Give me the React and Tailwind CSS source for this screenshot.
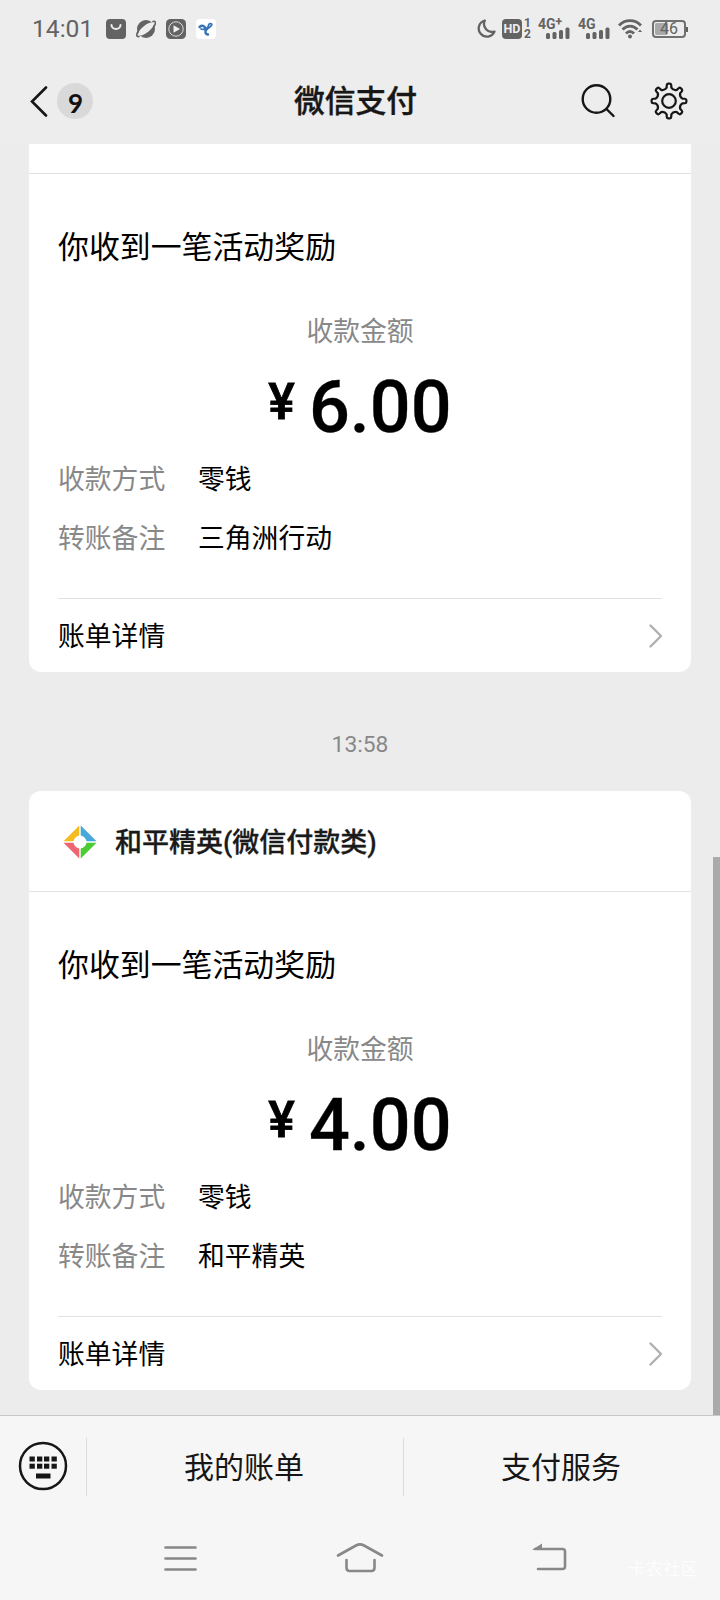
import React from "react";

const bills = [
  {
    title: "三角洲行动(微信付款类)",
    amount: "6.00",
    method: "零钱",
    remark: "三角洲行动",
    clipped: true,
  },
  {
    title: "和平精英(微信付款类)",
    amount: "4.00",
    method: "零钱",
    remark: "和平精英",
  },
];

// eight rounded teeth around the centre
const gearPath = () => {
  const point = (r, deg) => {
    const a = (deg * Math.PI) / 180;
    return `${(19 + r * Math.sin(a)).toFixed(2)} ${(19 - r * Math.cos(a)).toFixed(2)}`;
  };
  let d = "";
  for (let i = 0; i < 8; i++) {
    const a = i * 45;
    d += `${i === 0 ? "M" : "L"}${point(13.6, a - 10)} L${point(16, a - 8)} Q${point(17.4, a - 7)} ${point(17.4, a - 3)} L${point(17.4, a + 3)} Q${point(17.4, a + 7)} ${point(16, a + 8)} L${point(13.6, a + 10)} Q${point(11.2, a + 22.5)} ${point(13.6, a + 35)} `;
  }
  return d + "Z";
};

const Signal = () => (
  <svg className="h-3 w-6" viewBox="0 0 24 12" fill="#636363">
    <rect x="0" y="6" width="4" height="6" rx="1.5" />
    <rect x="6.5" y="5" width="4" height="7" rx="1.5" />
    <rect x="13" y="3" width="4" height="9" rx="1.5" />
    <rect x="19.5" y="0.5" width="4" height="11.5" rx="1.5" />
  </svg>
);

const StatusBar = () => (
  <div className="flex h-[58px] items-center justify-between pl-8 pr-8 text-[#636363]">
    <div className="flex items-center gap-[10px]">
      <span className="w-16 pt-px text-[24.6px] leading-none">14:01</span>
      <svg className="h-5 w-5" viewBox="0 0 20 20">
        <rect width="20" height="20" rx="4" fill="#636363" />
        <path d="M5.5 6a4.5 4 0 0 0 9 0" fill="none" stroke="#eee" strokeWidth="2" strokeLinecap="round" />
      </svg>
      <svg className="h-5 w-5" viewBox="0 0 20 20">
        <circle cx="10" cy="10" r="9" fill="#636363" />
        <ellipse cx="10" cy="10" rx="9.5" ry="3.6" transform="rotate(-38 10 10)" fill="#ededed" />
        <path d="M2 12.5C0 16 0.5 18 3 17.5M17 2.5C20 1.5 20 4.5 18 7.5" fill="none" stroke="#636363" strokeWidth="1.6" strokeLinecap="round" />
      </svg>
      <svg className="h-5 w-5" viewBox="0 0 20 20">
        <rect width="20" height="20" rx="4.5" fill="#636363" />
        <circle cx="10" cy="10" r="7.2" fill="none" stroke="#ddd" strokeWidth="1" />
        <path d="M7.5 6.3L14 10L7.5 13.7Z" fill="#eee" />
      </svg>
      <svg className="h-5 w-5" viewBox="0 0 20 20" fill="none" stroke="#3674b8" strokeLinecap="round">
        <rect width="20" height="20" rx="4" fill="#fff" stroke="none" />
        <path d="M3.5 8C6.5 5.5 9.5 7.5 9.5 10.5C9.5 13 9 15.5 12 15.5" strokeWidth="2.4" />
        <path d="M5 10C8 11 12.5 9 12.5 6.5C12.5 4.5 15.5 4 15.8 5.5C16 8 12 8 10.5 11" strokeWidth="1.8" />
      </svg>
    </div>

    <div className="flex items-center">
      <svg className="mr-[6px] h-5 w-[19px]" viewBox="0 0 19 20">
        <path d="M7.8 1.5A8.2 8.2 0 1 0 17.5 12.5A8 8 0 0 1 7.8 1.5Z" fill="none" stroke="#636363" strokeWidth="2.3" strokeLinejoin="round" />
      </svg>
      <span className="flex h-5 w-5 items-center justify-center rounded-[4px] bg-[#636363] text-[12.5px] font-bold leading-none text-[#eee]">
        HD
      </span>
      <span className="ml-[2px] mr-[6px] flex w-[8px] flex-col text-[12px] font-bold leading-[11px]">
        <span>1</span>
        <span>2</span>
      </span>
      <span className="mr-[8px] flex h-[22px] w-[32px] flex-col">
        <span className="flex h-[9px] text-[14px] font-bold leading-[12px]">
          4G<span className="-mt-[2px] text-[12px]">+</span>
        </span>
        <span className="flex justify-end"><Signal /></span>
      </span>
      <span className="mr-[8px] flex h-[22px] w-[32px] flex-col">
        <span className="h-[9px] text-[14px] font-bold leading-[12px]">4G</span>
        <span className="flex justify-end"><Signal /></span>
      </span>
      <svg className="mr-[10px] h-5 w-6" viewBox="0 0 24 20">
        <g fill="none" stroke="#636363" strokeWidth="2.9">
          <path d="M1 6.5C7 0 17 0 23 6.5" />
          <path d="M4.5 10.5C9 6 15 6 19.5 10.5" />
          <path d="M8 14.5C10.5 12 13.5 12 16 14.5" />
        </g>
        <circle cx="12" cy="17.5" r="2" fill="#636363" />
        <path d="M22 10.5L24 13H20Z" fill="#636363" />
      </svg>
      <span className="relative flex h-[18px] w-[34px] items-center justify-center overflow-hidden rounded-[4px] border-2 border-[#707070] text-[16px] leading-none">
        <span className="absolute left-[1px] top-[1px] h-[12px] w-[13px] rounded-[2px] bg-[#a8a8a8]" />
        <span className="relative">46</span>
      </span>
      <span className="h-[5px] w-[2px] bg-[#636363]" />
    </div>
  </div>
);

const Header = () => (
  <header className="h-36 shrink-0 bg-[#ededed]">
    <StatusBar />
    <div className="grid h-[86px] grid-cols-[1fr_auto_1fr] items-center pl-[30px] pr-8">
      <div className="flex items-center gap-[9px]">
        <svg className="h-[31px] w-[18px]" viewBox="0 0 18 31">
          <path d="M16 1.5L2 15.5L16 29.5" fill="none" stroke="#161616" strokeWidth="2.6" strokeLinecap="round" />
        </svg>
        <span className="flex h-9 w-9 items-center justify-center rounded-full bg-[#d9d9d9] pl-px pt-[3px] font-['Lato',sans-serif] text-[26px] font-bold leading-none text-[#111]">
          9
        </span>
      </div>
      <h1 className="-ml-[7px] pt-[2px] text-[30.8px] font-medium leading-none text-[#171717] [-webkit-text-stroke:0.4px]">
        微信支付
      </h1>
      <div className="flex items-center justify-end gap-[35px]">
        <svg className="h-[34px] w-[34px]" viewBox="0 0 34 34" fill="none" stroke="#161616" strokeWidth="2.4" strokeLinecap="round">
          <circle cx="15.5" cy="15" r="13.8" />
          <path d="M25.5 25L32.5 32" />
        </svg>
        <svg className="h-[38px] w-[38px]" viewBox="0 0 38 38" fill="none" stroke="#161616" strokeWidth="2.2" strokeLinejoin="round">
          <path d={gearPath()} />
          <circle cx="19" cy="19" r="6.8" />
        </svg>
      </div>
    </div>
  </header>
);

const GameLogo = () => (
  <svg className="h-[34px] w-[34px]" viewBox="0 0 34 34">
    <path d="M16.300 0.500V10.500Q11.500 11.500 10.500 16.300H0.500Z" fill="#f3bd22" />
    <path d="M17.700 0.500V10.500Q22.500 11.500 23.500 16.300H33.500Z" fill="#46a9d9" />
    <path d="M16.300 33.500V23.500Q11.500 22.500 10.500 17.700H0.500Z" fill="#ed6570" />
    <path d="M17.700 33.500V23.500Q22.500 22.500 23.500 17.700H33.500Z" fill="#4dcb32" />
  </svg>
);

const Row = ({ label, value }) => (
  <div className="flex h-[59px] items-center pt-[2px] text-[26.8px]">
    <span className="w-[140px] text-[#888]">{label}</span>
    <span>{value}</span>
  </div>
);

const BillCard = ({ bill }) => (
  <section
    className={`bg-white text-black ${bill.clipped ? "rounded-b-xl" : "rounded-xl"}`}
  >
    {bill.clipped ? (
      <div className="h-[30px] border-b border-[#e2e2e2]" />
    ) : (
      <div className="flex h-[101px] items-center gap-[18px] border-b border-[#e2e2e2] pl-[34px] pt-[2px]">
        <GameLogo />
        <h2 className="pt-[3px] text-[27px] font-medium leading-none text-[#1a1a1a] [-webkit-text-stroke:0.3px]">
          {bill.title}
        </h2>
      </div>
    )}
    <div className="px-[29px]">
      <p className="pt-[57px] text-[30.9px] leading-[34px]">你收到一笔活动奖励</p>
      <p className="mt-[51px] text-center text-[26.8px] leading-[32px] text-[#888]">收款金额</p>
      <div className="mt-[18px] flex h-[81px] items-start justify-center font-medium">
        <span className="mr-[14px] pt-[4px] text-[50px] leading-[65px] [-webkit-text-stroke:0.8px]">¥</span>
        <span className="text-[72px] leading-[84px] [-webkit-text-stroke:0.3px]">{bill.amount}</span>
      </div>
      <div className="mt-[3px]">
        <Row label="收款方式" value={bill.method} />
        <Row label="转账备注" value={bill.remark} />
      </div>
      <div className="mt-[30px] flex h-[74px] items-center justify-between border-t border-[#e2e2e2] text-[26.8px]">
        <span className="pt-[3px]">账单详情</span>
        <svg className="h-6 w-[14px]" viewBox="0 0 14 24">
          <path d="M2.5 1.5L13 12L2.5 22.5" fill="none" stroke="#b0b0b0" strokeWidth="2.4" strokeLinecap="round" strokeLinejoin="round" />
        </svg>
      </div>
    </div>
  </section>
);

const BottomMenu = () => (
  <div className="flex h-[102px] items-center border-t border-[#c8c8c8] text-[30px] text-[#161616]">
    <div className="flex h-[58px] w-[87px] items-center border-r border-[#dcdcdc] pb-[2px] pl-[18px]">
      <svg className="h-[50px] w-[50px]" viewBox="0 0 50 50">
        <circle cx="25" cy="25" r="23" fill="none" stroke="#161616" strokeWidth="2.5" />
        <g fill="#161616">
          {[11.5, 19, 26, 33.5].map((x) => (
            <React.Fragment key={x}>
              <rect x={x} y="15.5" width="5.3" height="5" />
              <rect x={x} y="22.7" width="5.3" height="5" />
            </React.Fragment>
          ))}
          <rect x="18" y="32.5" width="14.5" height="5" />
        </g>
      </svg>
    </div>
    <div className="flex h-[58px] w-[317px] items-center justify-center border-r border-[#dcdcdc] pr-[2px] pt-[2px]">
      我的账单
    </div>
    <div className="flex h-[58px] flex-1 items-center justify-center pr-[2px] pt-[2px]">支付服务</div>
  </div>
);

const NavBar = () => (
  <nav className="relative flex h-[82px] items-center pl-[162px]">
    <svg className="h-[30px] w-[37px]" viewBox="0 0 37 30" stroke="#888" strokeWidth="2.7" strokeLinecap="round">
      <path d="M3.5 4.5H33.5M3.5 15.5H33.5M3.5 26.5H33.5" />
    </svg>
    <svg className="ml-[137px] h-[32px] w-[48px]" viewBox="0 0 48 32" fill="none" stroke="#888" strokeWidth="2.6" strokeLinecap="round" strokeLinejoin="round">
      <path d="M2 13.5L20 3.5Q24 1.3 28 3.5L46 13.5" />
      <path d="M10.5 18V25.5Q10.5 29 13.5 29H35.5Q38.5 29 38.5 25.5V18" />
    </svg>
    <svg className="ml-[148px] h-[30px] w-[36px]" viewBox="0 0 36 30" fill="none" stroke="#888" strokeWidth="2.6" strokeLinecap="round">
      <path d="M3 6H30.5Q33 6 33 8.5V23.5Q33 26 30.5 26H6" />
      <path d="M0 7L10 0.5V7Z" fill="#888" stroke="none" />
    </svg>
    <span className="absolute right-[22px] top-[40px] text-[17.5px] leading-[24px] text-[#fdfdfd]">卡农社区</span>
  </nav>
);

const App = () => {
  return (
    <div className="flex h-[1600px] w-[720px] flex-col overflow-hidden bg-[#ececec] font-['Roboto','Noto_Sans_CJK_SC',sans-serif]">
      <Header />
      <main className="relative h-[1271px] shrink-0 px-[29px]">
        <BillCard bill={bills[0]} />
        <p className="flex h-[119px] items-center justify-center pt-[28px] text-[22.8px] text-[#888]">13:58</p>
        <BillCard bill={bills[1]} />
        {/* Scrollbar */}
        <div className="absolute bottom-0 right-0 h-[558px] w-[7px] bg-[#aaa]" />
      </main>
      <footer className="flex-1 bg-[#f6f6f6]">
        <BottomMenu />
        <NavBar />
      </footer>
    </div>
  );
};

export default App;
